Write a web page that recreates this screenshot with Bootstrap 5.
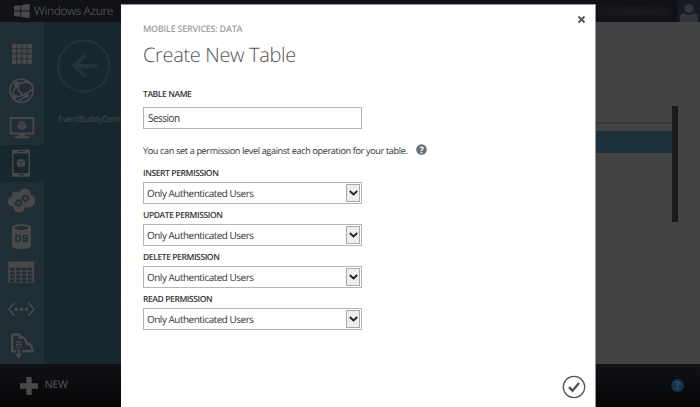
<!DOCTYPE html>
<html lang="en">
<head>
<meta charset="utf-8">
<meta name="viewport" content="width=device-width, initial-scale=1">
<title>Create New Table - Windows Azure</title>
<link href="https://cdn.jsdelivr.net/npm/bootstrap@5.3.0/dist/css/bootstrap.min.css" rel="stylesheet">
<style>
body{height:407px;font-family:"Open Sans","Noto Sans",sans-serif;background:#424242;font-size:11px;color:#333;text-rendering:geometricPrecision}
svg{display:block;flex:none}
.topbar{height:22px;background:#101217;color:#494a4d}
.brand-logo{margin-left:14px}
.brand-name{font-size:11.8px;line-height:22px;letter-spacing:-.46px;margin-left:4px}
.avatar{width:22px;height:22px;background:#171c24}
.account-blur{width:74px;height:9px;margin-right:8px;background:linear-gradient(90deg,#15171b,#1b1c1f 50%,#16181c);filter:blur(2px)}
.rail{width:44px;padding-top:14px;background:#1f2d35;color:#484848}
.rail-item{height:36.4px}
.rail-item.active{background:#17272e}
.side{width:77px;background:#17272e;color:#454a4d}
.back{margin:17px 0 0 13px;color:#20343d}
.side-link{font-size:8.6px;line-height:12px;margin:20px 0 0 14px;white-space:nowrap;letter-spacing:-.34px}
.content-area{background:#424242;padding:100px 22px 0 0}
.grid-head{width:77px;height:9px;border-top:2px solid #373737}
.grid-row{width:77px;height:22px;background:#1d313a}
.scroll-thumb{width:6px;height:116px;margin-top:-16px;background:#1b1b1b}
.bottombar{height:44px;background:linear-gradient(#111316,#050507);color:#484848}
.plus{margin-left:20px}
.new-label{font-size:10.5px;font-weight:600;letter-spacing:-.35px;margin-left:6.5px}
.help-dot{margin:-1px 16.5px 0 0}
.dialog{left:121px;top:4px;width:474.5px;height:403px;background:#fff;border-top:1px solid #929292;border-right:1px solid #929292;padding:17px 0 0 22px}
.close-x{right:9px;top:10px}
.confirm{right:9px;bottom:8.5px}
.crumb{font-size:9px;font-weight:600;line-height:14px;letter-spacing:-.25px;color:#a0a0a0}
.title-text{font-weight:300;font-size:20px;line-height:28px;letter-spacing:-.33px;color:#555;margin:4.5px 0 0}
.field-label{display:block;font-size:8.5px;font-weight:600;line-height:12px;letter-spacing:-.4px;color:#333}
.name-label{margin-top:20px}
.field{width:219px;height:22px;border:1px solid #b5b5b5;border-radius:0;background:#fff;font-size:9.9px;line-height:20px;letter-spacing:-.45px;color:#333;padding:0 4px;box-shadow:none}
.name-field{margin-top:6.5px}
.hint{font-size:9.1px;line-height:14px;letter-spacing:-.35px;margin-top:15px;height:14px}
.hint-dot{margin:-4px 0 0 9px}
.perm{height:42px}
.perms{margin-top:10px}
.pick{margin-top:2px;padding:0 1px 0 3px}
.pick-btn{width:14px;height:18px;background:#eee;border:1px solid #aaa}
</style>
<script src="https://cdn.jsdelivr.net/npm/bootstrap@5.3.0/dist/js/bootstrap.bundle.min.js"></script>
</head>
<body class="d-flex flex-column overflow-hidden position-relative">
<header class="topbar d-flex align-items-center flex-shrink-0">
  <svg class="brand-logo" width="16" height="14" viewBox="0 0 16 14" fill="#494a4d"><path d="M0 2 6.4 1.2V6.6H0zM7.2 1.1 15.7 0V6.6H7.2zM0 7.4H6.4V12.8L0 12zM7.2 7.4H15.7V14L7.2 12.9z"/></svg>
  <span class="brand-name">Windows Azure</span>
  <span class="account-blur ms-auto"></span>
  <svg class="avatar" viewBox="0 0 22 22" fill="#333539"><circle cx="11" cy="8.5" r="4.6"/><path d="M2 22V18Q2 13.5 6 13.3Q11 16.5 16 13.3Q20 13.5 20 18V22z"/></svg>
</header>
<main class="d-flex flex-grow-1">
  <nav class="rail flex-shrink-0">
    <div class="rail-item"><svg width="44" height="36.4" viewBox="0 36 44 36.4" fill="currentColor"><path d="M12 44h20v20H12z"/><path d="M16.7 44v20M21.8 44v20M26.9 44v20M12 48.7h20M12 53.8h20M12 58.9h20" stroke="#1f2d35" stroke-width=".8"/></svg></div>
    <div class="rail-item"><svg width="44" height="36.4" viewBox="0 72.4 44 36.4" fill="currentColor" stroke="currentColor"><circle cx="21.5" cy="91" r="11.6" fill="none" stroke-width="1.7"/><path d="M17 85 26 82M17 85Q18 94 26 96M17 85 12 95M26 96 19 101M14 97Q22 98 32 90M26 82Q31 83 33 87" fill="none" stroke-width="1.7"/><circle cx="17" cy="85" r="2.7"/><circle cx="26.5" cy="96" r="2.2"/><circle cx="14.5" cy="97" r="2"/><circle cx="26" cy="82" r="1.5"/></svg></div>
    <div class="rail-item"><svg width="44" height="36.4" viewBox="0 108.8 44 36.4" fill="currentColor"><path d="M10.7 117.8h22.6v15.5H10.7z" fill="none" stroke="currentColor" stroke-width="1.8"/><path d="M19 134h6v2h4.5v2h-15v-2H19zM22 121l4 1.8v5L22 130l-4-2.2v-5z"/><path d="M18 123l4 1.8 4-1.8M22 124.8V130" fill="none" stroke="#1f2d35" stroke-width=".7"/></svg></div>
    <div class="rail-item active"><svg width="44" height="36.4" viewBox="0 145.2 44 36.4" fill="currentColor"><path fill-rule="evenodd" d="M13 150h16q1 0 1 1v25q0 1-1 1H13q-1 0-1-1V151q0-1 1-1zM13.5 153.7v19.5h15v-19.5zM18 151.4v.8h7v-.8zM19 174.5v1h5v-1z"/><path d="M21 159l4 1.8v5L21 168l-4-2.2v-5z"/><path d="M17 161l4 1.8 4-1.8M21 162.8V168" fill="none" stroke="#17272e" stroke-width=".7"/></svg></div>
    <div class="rail-item"><svg width="44" height="36.4" viewBox="0 181.6 44 36.4" fill="currentColor"><path d="M12 206Q7 205 8 200Q9 196 12 196Q11 191 16 191Q18 191 19 192Q21 188 26 188Q31 189 31 194Q36 196 35 201Q34 207 29 207Q27 208 25 206Q24 212 19 212Q14 212 14 207Z"/><g fill="none" stroke="#1f2d35"><circle cx="18.5" cy="202.5" r="2.3" stroke-width="1.5"/><circle cx="18.5" cy="202.5" r="3.5" stroke-width="1.1" stroke-dasharray="1.35 1.4"/><circle cx="25.5" cy="197.8" r="2.3" stroke-width="1.5"/><circle cx="25.5" cy="197.8" r="3.5" stroke-width="1.1" stroke-dasharray="1.35 1.4"/></g></svg></div>
    <div class="rail-item"><svg width="44" height="36.4" viewBox="0 218 44 36.4" fill="currentColor"><path d="M12 227.5Q12 224.3 21.5 224.3Q31 224.3 31 227.5V246Q31 249 21.5 249Q12 249 12 246z"/><ellipse cx="21.4" cy="228" rx="6.8" ry="1.9" fill="#1f2d35"/><text x="21.3" y="242.5" text-anchor="middle" font-size="10" font-weight="700" fill="#1f2d35">DB</text></svg></div>
    <div class="rail-item"><svg width="44" height="36.4" viewBox="0 254.4 44 36.4" fill="currentColor"><rect x="8.3" y="262" width="25.7" height="21.2" rx="1"/><path d="M10 269.5h22.5M10 273.5h22.5M10 277.3h22.5M10 281h22.5" stroke="#1f2d35" stroke-width="2.7" stroke-dasharray="4.6 1.3" fill="none"/></svg></div>
    <div class="rail-item"><svg width="44" height="36.4" viewBox="0 290.8 44 36.4" fill="currentColor"><path d="M15 302 9 309l6 7M28 302l6 7-6 7" fill="none" stroke="currentColor" stroke-width="1.6"/><circle cx="16.5" cy="309" r="1.7"/><circle cx="21.5" cy="309" r="1.7"/><circle cx="26.5" cy="309" r="1.7"/></svg></div>
    <div class="rail-item"><svg width="44" height="36.4" viewBox="0 327.2 44 36.4" fill="none" stroke="currentColor"><path d="M16.3 351.5H12.2V334.7H19.8V339.5M21 337.5Q25.5 337 26.8 344Q32.5 344 32.5 351.5H22" stroke-width="2.6"/><path d="M15.8 342h6M15.8 344.7h6M15.8 347.3h6" stroke-width="1.3"/><path d="M18.7 349v6" stroke-width="2.4"/><path d="M15.2 354h7L18.7 359z" fill="currentColor" stroke="none"/></svg></div>
  </nav>
  <aside class="side flex-shrink-0">
    <svg class="back" width="54" height="54" viewBox="0 0 54 54" fill="none" stroke="currentColor"><circle cx="26.7" cy="27" r="25.6" stroke-width="2"/><path d="M17 27H40" stroke-width="4"/><path d="M28.5 16.5 17 27 28.5 37.5" stroke-width="3.8"/></svg>
    <div class="side-link">EventBuddyDemo</div>
  </aside>
  <section class="content-area flex-grow-1 d-flex justify-content-end align-items-start">
    <div><div class="grid-head"></div><div class="grid-row"></div></div>
    <div class="scroll-thumb"></div>
  </section>
</main>
<footer class="bottombar d-flex align-items-center flex-shrink-0">
  <svg class="plus" width="18" height="18" viewBox="0 0 18 18" fill="currentColor"><path d="M6.3 0h5.4v6.3H18v5.4h-6.3V18H6.3v-6.3H0V6.3h6.3z"/></svg>
  <span class="new-label">NEW</span>
  <svg class="help-dot ms-auto" width="13" height="13" viewBox="0 0 13 13"><circle cx="6.5" cy="6.5" r="6.4" fill="#11344f"/><text x="6.5" y="10.2" font-size="10.5" font-weight="700" text-anchor="middle" fill="#4a5156">?</text></svg>
</footer>
<div class="dialog position-absolute" role="dialog" aria-label="Create New Table">
  <svg class="close-x position-absolute" width="9" height="9" viewBox="0 0 9 9" stroke="#555" stroke-width="1.9"><path d="M1.5 1.5l6 6M7.5 1.5l-6 6"/></svg>
  <div class="crumb">MOBILE SERVICES: DATA</div>
  <h1 class="title-text">Create New Table</h1>
  <label class="field-label name-label" for="tn">TABLE NAME</label>
  <input id="tn" class="form-control field name-field" value="Session">
  <div class="hint d-flex align-items-center"><span>You can set a permission level against each operation for your table.</span>
    <svg class="hint-dot" width="11" height="11" viewBox="0 0 11 11"><circle cx="5.5" cy="5.5" r="5.3" fill="#6a6f77"/><text x="5.5" y="8.7" font-size="9" font-weight="700" text-anchor="middle" fill="#fff">?</text></svg></div>
  <div class="perms">
    <div class="perm"><span class="field-label">INSERT PERMISSION</span><div class="field pick d-flex align-items-center justify-content-between"><span>Only Authenticated Users</span><span class="pick-btn d-flex align-items-center justify-content-center"><svg width="9" height="6" viewBox="0 0 9 6" fill="none" stroke="#222" stroke-width="1.8"><path d="M.8 1 4.5 4.5 8.2 1"/></svg></span></div></div>
    <div class="perm"><span class="field-label">UPDATE PERMISSION</span><div class="field pick d-flex align-items-center justify-content-between"><span>Only Authenticated Users</span><span class="pick-btn d-flex align-items-center justify-content-center"><svg width="9" height="6" viewBox="0 0 9 6" fill="none" stroke="#222" stroke-width="1.8"><path d="M.8 1 4.5 4.5 8.2 1"/></svg></span></div></div>
    <div class="perm"><span class="field-label">DELETE PERMISSION</span><div class="field pick d-flex align-items-center justify-content-between"><span>Only Authenticated Users</span><span class="pick-btn d-flex align-items-center justify-content-center"><svg width="9" height="6" viewBox="0 0 9 6" fill="none" stroke="#222" stroke-width="1.8"><path d="M.8 1 4.5 4.5 8.2 1"/></svg></span></div></div>
    <div class="perm"><span class="field-label">READ PERMISSION</span><div class="field pick d-flex align-items-center justify-content-between"><span>Only Authenticated Users</span><span class="pick-btn d-flex align-items-center justify-content-center"><svg width="9" height="6" viewBox="0 0 9 6" fill="none" stroke="#222" stroke-width="1.8"><path d="M.8 1 4.5 4.5 8.2 1"/></svg></span></div></div>
  </div>
  <svg class="confirm position-absolute" width="24" height="24" viewBox="0 0 24 24" fill="none" stroke="#555"><circle cx="12" cy="12" r="10.7" stroke-width="1.3"/><path d="M7 12.2 10.5 15.7 17 8" stroke-width="2.5"/></svg>
</div>
</body>
</html>
